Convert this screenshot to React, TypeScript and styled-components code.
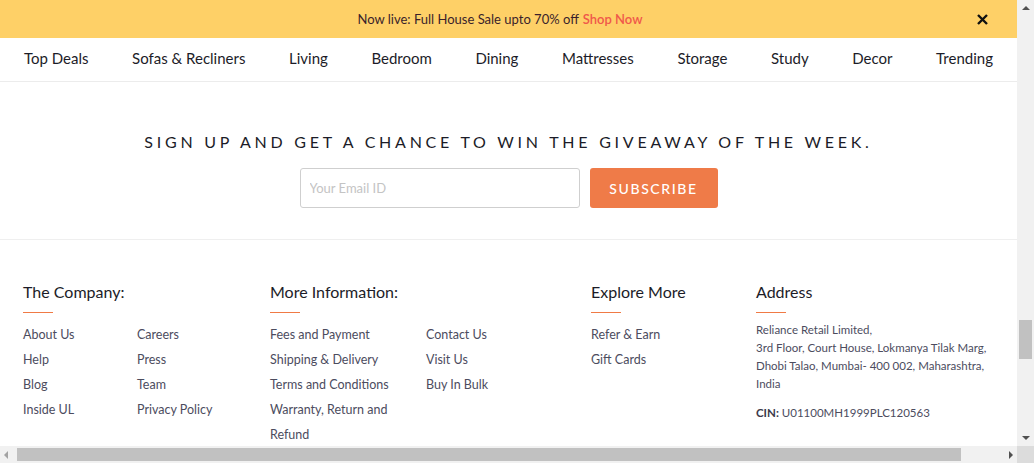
import React from "react";
import styled, { createGlobalStyle } from "styled-components";

const Global = createGlobalStyle`
  html, body { margin: 0; padding: 0; overflow: hidden; background: #fff; }
  * { box-sizing: border-box; }
  body { font-family: Lato, "Open Sans", Arial, sans-serif; }
`;

const Frame = styled.div`
  width: 1034px;
  height: 463px;
  display: grid;
  grid-template-columns: 1017px 17px;
  grid-template-rows: 446px 17px;
`;

const Viewport = styled.div`
  overflow: hidden;
  background: #fff;
`;

const Banner = styled.div`
  height: 38px;
  background: #fed067;
  display: flex;
  align-items: center;
  justify-content: center;
  position: relative;
  font-size: 13px;
  color: #3b1f2b;
  padding-right: 17px;
`;

const ShopNow = styled.a`
  color: #f0584a;
  font-weight: 600;
  margin-left: 4px;
`;

const Close = styled.button`
  position: absolute;
  right: 28px;
  top: 12px;
  width: 14px;
  height: 14px;
  padding: 0;
  border: 0;
  background: none;
  display: flex;
  align-items: center;
  justify-content: center;
`;

const Nav = styled.nav`
  height: 44px;
  display: flex;
  align-items: center;
  justify-content: space-between;
  padding: 0 24px 3px;
  border-bottom: 1px solid #ececec;
`;

const NavItem = styled.a`
  font-size: 15px;
  color: #1c1c28;
  white-space: nowrap;
`;

const Signup = styled.section`
  display: flex;
  flex-direction: column;
  align-items: center;
  padding: 50px 0 31px;
  border-bottom: 1px solid #efefef;
`;

const SignupTitle = styled.h2`
  margin: 0;
  font-size: 16px;
  line-height: 20px;
  font-weight: 400;
  letter-spacing: 3.75px;
  color: #1c1c28;
`;

const SignupForm = styled.div`
  display: flex;
  gap: 10px;
  margin-top: 16px;
`;

const EmailInput = styled.input`
  width: 280px;
  height: 40px;
  border: 1px solid #cfcfcf;
  border-radius: 3px;
  padding: 0 9px;
  font-family: inherit;
  font-size: 13px;
  color: #333;
  &::placeholder { color: #c4c4c4; }
`;

const SubscribeButton = styled.button`
  width: 128px;
  height: 40px;
  border: 0;
  border-radius: 3px;
  background: #ef7b48;
  color: #fff;
  font-family: inherit;
  font-size: 14px;
  font-weight: 500;
  letter-spacing: 1.6px;
`;

const Footer = styled.footer`
  display: grid;
  grid-template-columns: 247px 321px 165px 1fr;
  padding: 42px 0 0 23px;
`;

const Column = styled.div`
  display: flex;
  flex-direction: column;
`;

const ColTitle = styled.h3`
  margin: 0;
  font-size: 16px;
  line-height: 20px;
  font-weight: 400;
  color: #1c1c28;
  &::after {
    content: "";
    display: block;
    width: 30px;
    height: 1px;
    background: #f07a45;
    margin-top: 10px;
  }
`;

const LinkGrid = styled.div<{ $cols: string }>`
  display: grid;
  grid-template-columns: ${(p) => p.$cols};
  margin-top: 9px;
`;

const LinkList = styled.div`
  display: flex;
  flex-direction: column;
`;

const FooterLink = styled.a`
  font-size: 12.5px;
  line-height: 25px;
  color: #4c4c5e;
`;

const Address = styled.p`
  margin: 8px 0 0;
  font-size: 11.5px;
  line-height: 18px;
  color: #4c4c5e;
`;

const Cin = styled.p`
  margin: 11px 0 0;
  font-size: 11.5px;
  line-height: 18px;
  color: #4c4c5e;
  b { font-weight: 700; color: #3a3a4a; }
`;

const VScroll = styled.div`
  background: #f1f1f1;
  display: flex;
  flex-direction: column;
  align-items: center;
  justify-content: space-between;
  position: relative;
`;

const VThumb = styled.div`
  position: absolute;
  left: 2px;
  top: 320px;
  width: 13px;
  height: 39px;
  background: #c1c1c1;
`;

const HScroll = styled.div`
  background: #f1f1f1;
  position: relative;
  display: flex;
  align-items: center;
  justify-content: space-between;
  padding: 0 4px;
`;

const HThumb = styled.div`
  position: absolute;
  left: 17px;
  top: 2px;
  width: 944px;
  height: 13px;
  background: #c1c1c1;
`;

const Corner = styled.div`
  background: #dcdcdc;
`;

const Arrow = ({ dir }: { dir: "up" | "down" | "left" | "right" }) => {
  const pts = {
    up: "0,4 4,0 8,4",
    down: "0,0 8,0 4,4",
    left: "4,0 4,8 0,4",
    right: "0,0 0,8 4,4",
  }[dir];
  const vertical = dir === "up" || dir === "down";
  return (
    <svg
      width={vertical ? 8 : 4}
      height={vertical ? 4 : 8}
      viewBox={vertical ? "0 0 8 4" : "0 0 4 8"}
      style={{ margin: vertical ? "6px 0" : "0" }}
    >
      <polygon points={pts} fill={dir === "left" ? "#a3a3a3" : "#505050"} />
    </svg>
  );
};

const navItems = [
  "Top Deals",
  "Sofas & Recliners",
  "Living",
  "Bedroom",
  "Dining",
  "Mattresses",
  "Storage",
  "Study",
  "Decor",
  "Trending",
];

export default function App() {
  return (
    <>
      <Global />
      <Frame>
        <Viewport>
          <Banner>
            <span>
              Now live: Full House Sale upto 70% off<ShopNow>Shop Now</ShopNow>
            </span>
            <Close aria-label="close">
              <svg width="11" height="11" viewBox="0 0 11 11">
                <path d="M1 1L10 10M10 1L1 10" stroke="#111" strokeWidth="2.4" />
              </svg>
            </Close>
          </Banner>
          <Nav>
            {navItems.map((n) => (
              <NavItem key={n}>{n}</NavItem>
            ))}
          </Nav>
          <Signup>
            <SignupTitle>SIGN UP AND GET A CHANCE TO WIN THE GIVEAWAY OF THE WEEK.</SignupTitle>
            <SignupForm>
              <EmailInput placeholder="Your Email ID" />
              <SubscribeButton>SUBSCRIBE</SubscribeButton>
            </SignupForm>
          </Signup>
          <Footer>
            <Column>
              <ColTitle>The Company:</ColTitle>
              <LinkGrid $cols="114px 1fr">
                <LinkList>
                  <FooterLink>About Us</FooterLink>
                  <FooterLink>Help</FooterLink>
                  <FooterLink>Blog</FooterLink>
                  <FooterLink>Inside UL</FooterLink>
                </LinkList>
                <LinkList>
                  <FooterLink>Careers</FooterLink>
                  <FooterLink>Press</FooterLink>
                  <FooterLink>Team</FooterLink>
                  <FooterLink>Privacy Policy</FooterLink>
                </LinkList>
              </LinkGrid>
            </Column>
            <Column>
              <ColTitle>More Information:</ColTitle>
              <LinkGrid $cols="156px 1fr">
                <LinkList>
                  <FooterLink>Fees and Payment</FooterLink>
                  <FooterLink>Shipping &amp; Delivery</FooterLink>
                  <FooterLink>Terms and Conditions</FooterLink>
                  <FooterLink>
                    Warranty, Return and
                    <br />
                    Refund
                  </FooterLink>
                </LinkList>
                <LinkList>
                  <FooterLink>Contact Us</FooterLink>
                  <FooterLink>Visit Us</FooterLink>
                  <FooterLink>Buy In Bulk</FooterLink>
                </LinkList>
              </LinkGrid>
            </Column>
            <Column>
              <ColTitle>Explore More</ColTitle>
              <LinkGrid $cols="1fr">
                <LinkList>
                  <FooterLink>Refer &amp; Earn</FooterLink>
                  <FooterLink>Gift Cards</FooterLink>
                </LinkList>
              </LinkGrid>
            </Column>
            <Column>
              <ColTitle>Address</ColTitle>
              <Address>
                Reliance Retail Limited,
                <br />
                3rd Floor, Court House, Lokmanya Tilak Marg,
                <br />
                Dhobi Talao, Mumbai- 400 002, Maharashtra,
                <br />
                India
              </Address>
              <Cin>
                <b>CIN:</b> U01100MH1999PLC120563
              </Cin>
            </Column>
          </Footer>
        </Viewport>
        <VScroll>
          <Arrow dir="up" />
          <VThumb />
          <Arrow dir="down" />
        </VScroll>
        <HScroll>
          <Arrow dir="left" />
          <HThumb />
          <Arrow dir="right" />
        </HScroll>
        <Corner />
      </Frame>
    </>
  );
}
